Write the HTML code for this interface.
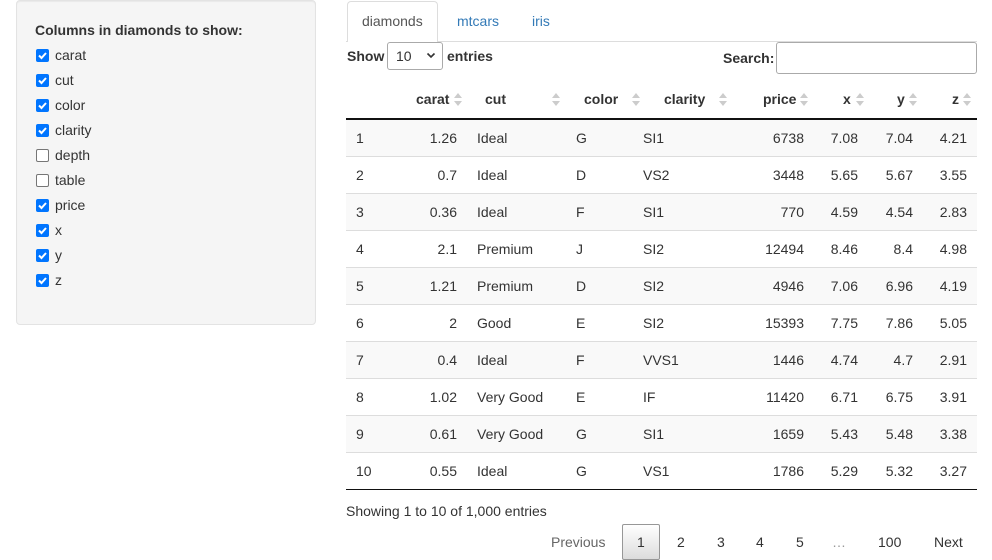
<!DOCTYPE html>
<html><head><meta charset="utf-8"><style>
*{box-sizing:border-box;margin:0;padding:0}
body{width:992px;height:560px;overflow:hidden;background:#fff;font-family:"Liberation Sans",Arial,sans-serif;font-size:14px;color:#333;position:relative}
.a{position:absolute;white-space:nowrap;line-height:16px}
.panel{position:absolute;left:16px;top:0;width:300px;height:325px;background:#f5f5f5;border:1px solid #e3e3e3;border-radius:4px;box-shadow:inset 0 1px 1px rgba(0,0,0,.05)}
.cb{position:absolute;left:36px;width:13px;height:13px;border-radius:2px;background:#0075ff}
.cb svg{position:absolute;left:1px;top:1px}
.cb.u{background:#fff;border:1px solid #767676}
.b{font-weight:bold}
.sort{position:absolute;width:8px;height:14px}
.row{position:absolute;left:346px;width:631px;height:37px;border-top:1px solid #ddd}
.odd{background:#f9f9f9}
.r{text-align:right}
</style></head><body>
<div class="panel"></div>
<div class="a b" style="left:35px;top:22px">Columns in diamonds to show:</div>

<div class="cb" style="top:49px"><svg width="11" height="11" viewBox="0 0 11 11"><path d="M2 5.5l2.5 2.5 4.5-5" stroke="#fff" stroke-width="2" fill="none"/></svg></div><div class="a" style="left:55px;top:47px">carat</div>
<div class="cb" style="top:74px"><svg width="11" height="11" viewBox="0 0 11 11"><path d="M2 5.5l2.5 2.5 4.5-5" stroke="#fff" stroke-width="2" fill="none"/></svg></div><div class="a" style="left:55px;top:72px">cut</div>
<div class="cb" style="top:99px"><svg width="11" height="11" viewBox="0 0 11 11"><path d="M2 5.5l2.5 2.5 4.5-5" stroke="#fff" stroke-width="2" fill="none"/></svg></div><div class="a" style="left:55px;top:97px">color</div>
<div class="cb" style="top:124px"><svg width="11" height="11" viewBox="0 0 11 11"><path d="M2 5.5l2.5 2.5 4.5-5" stroke="#fff" stroke-width="2" fill="none"/></svg></div><div class="a" style="left:55px;top:122px">clarity</div>
<div class="cb u" style="top:149px"></div><div class="a" style="left:55px;top:147px">depth</div>
<div class="cb u" style="top:174px"></div><div class="a" style="left:55px;top:172px">table</div>
<div class="cb" style="top:199px"><svg width="11" height="11" viewBox="0 0 11 11"><path d="M2 5.5l2.5 2.5 4.5-5" stroke="#fff" stroke-width="2" fill="none"/></svg></div><div class="a" style="left:55px;top:197px">price</div>
<div class="cb" style="top:224px"><svg width="11" height="11" viewBox="0 0 11 11"><path d="M2 5.5l2.5 2.5 4.5-5" stroke="#fff" stroke-width="2" fill="none"/></svg></div><div class="a" style="left:55px;top:222px">x</div>
<div class="cb" style="top:249px"><svg width="11" height="11" viewBox="0 0 11 11"><path d="M2 5.5l2.5 2.5 4.5-5" stroke="#fff" stroke-width="2" fill="none"/></svg></div><div class="a" style="left:55px;top:247px">y</div>
<div class="cb" style="top:274px"><svg width="11" height="11" viewBox="0 0 11 11"><path d="M2 5.5l2.5 2.5 4.5-5" stroke="#fff" stroke-width="2" fill="none"/></svg></div><div class="a" style="left:55px;top:272px">z</div>

<!-- tabs -->
<div style="position:absolute;left:346px;top:41px;width:631px;border-top:1px solid #ddd"></div>
<div style="position:absolute;left:347px;top:1px;width:91px;height:41px;background:#fff;border:1px solid #ddd;border-bottom:none;border-radius:4px 4px 0 0"></div>
<div class="a" style="left:362px;top:13px;color:#555">diamonds</div>
<div class="a" style="left:457px;top:13px;color:#337ab7">mtcars</div>
<div class="a" style="left:532px;top:13px;color:#337ab7">iris</div>

<div class="a b" style="left:347px;top:48px">Show</div>
<div style="position:absolute;left:387px;top:42px;width:56px;height:28px;border:1px solid #aaa;border-radius:3px;background:#fff"></div>
<div class="a" style="left:396px;top:48px">10</div>
<svg style="position:absolute;left:426px;top:52px" width="10" height="7" viewBox="0 0 10 7"><path d="M1.5 1.5l3.5 3.5 3.5-3.5" stroke="#333" stroke-width="1.6" fill="none"/></svg>
<div class="a b" style="left:447px;top:48px">entries</div>
<div class="a b" style="left:723px;top:50px">Search:</div>
<div style="position:absolute;left:776px;top:42px;width:201px;height:32px;border:1px solid #aaa;border-radius:3px;background:#fff"></div>

<!-- header -->
<div class="a b" style="left:416px;top:91px">carat</div>
<div class="a b" style="left:485px;top:91px">cut</div>
<div class="a b" style="left:584px;top:91px">color</div>
<div class="a b" style="left:664px;top:91px">clarity</div>
<div class="a b" style="left:763px;top:91px">price</div>
<div class="a b" style="left:843px;top:91px">x</div>
<div class="a b" style="left:897px;top:91px">y</div>
<div class="a b" style="left:952px;top:91px">z</div>
<svg style="position:absolute;left:0;top:0" width="992" height="130">
<g fill="#ccc">
<path d="M454 98h8l-4-5z M454 101h8l-4 5z"/>
<path d="M552 98h8l-4-5z M552 101h8l-4 5z"/>
<path d="M632 98h8l-4-5z M632 101h8l-4 5z"/>
<path d="M719 98h8l-4-5z M719 101h8l-4 5z"/>
<path d="M800 98h8l-4-5z M800 101h8l-4 5z"/>
<path d="M856 98h8l-4-5z M856 101h8l-4 5z"/>
<path d="M909 98h8l-4-5z M909 101h8l-4 5z"/>
<path d="M963 98h8l-4-5z M963 101h8l-4 5z"/>
</g></svg>
<div style="position:absolute;left:346px;top:118px;width:631px;border-top:2px solid #111"></div>

<div class="row odd" style="top:120px;border-top:none"></div>
<div class="row" style="top:156px"></div>
<div class="row odd" style="top:193px"></div>
<div class="row" style="top:230px"></div>
<div class="row odd" style="top:267px"></div>
<div class="row" style="top:304px"></div>
<div class="row odd" style="top:341px"></div>
<div class="row" style="top:378px"></div>
<div class="row odd" style="top:415px"></div>
<div class="row" style="top:452px"></div>
<div style="position:absolute;left:346px;top:489px;width:631px;border-top:1px solid #111"></div>

<div id="cells"></div>
<script>
var d=[["1","1.26","Ideal","G","SI1","6738","7.08","7.04","4.21"],
["2","0.7","Ideal","D","VS2","3448","5.65","5.67","3.55"],
["3","0.36","Ideal","F","SI1","770","4.59","4.54","2.83"],
["4","2.1","Premium","J","SI2","12494","8.46","8.4","4.98"],
["5","1.21","Premium","D","SI2","4946","7.06","6.96","4.19"],
["6","2","Good","E","SI2","15393","7.75","7.86","5.05"],
["7","0.4","Ideal","F","VVS1","1446","4.74","4.7","2.91"],
["8","1.02","Very Good","E","IF","11420","6.71","6.75","3.91"],
["9","0.61","Very Good","G","SI1","1659","5.43","5.48","3.38"],
["10","0.55","Ideal","G","VS1","1786","5.29","5.32","3.27"]];
var h="";
for(var i=0;i<10;i++){var t=130+i*37,r=d[i];
h+='<div class="a" style="left:356px;top:'+t+'px">'+r[0]+'</div>';
h+='<div class="a r" style="right:'+(992-457)+'px;top:'+t+'px">'+r[1]+'</div>';
h+='<div class="a" style="left:477px;top:'+t+'px">'+r[2]+'</div>';
h+='<div class="a" style="left:576px;top:'+t+'px">'+r[3]+'</div>';
h+='<div class="a" style="left:643px;top:'+t+'px">'+r[4]+'</div>';
h+='<div class="a r" style="right:'+(992-804)+'px;top:'+t+'px">'+r[5]+'</div>';
h+='<div class="a r" style="right:'+(992-858)+'px;top:'+t+'px">'+r[6]+'</div>';
h+='<div class="a r" style="right:'+(992-913)+'px;top:'+t+'px">'+r[7]+'</div>';
h+='<div class="a r" style="right:'+(992-967)+'px;top:'+t+'px">'+r[8]+'</div>';}
document.getElementById("cells").innerHTML=h;
</script>

<div class="a" style="left:346px;top:503px">Showing 1 to 10 of 1,000 entries</div>
<div style="position:absolute;left:622px;top:524px;width:38px;height:36px;border:1px solid #979797;border-radius:2px;background:linear-gradient(#fff,#dcdcdc)"></div>
<div class="a" style="left:551px;top:534px;color:#666">Previous</div>
<div class="a" style="left:637px;top:534px">1</div>
<div class="a" style="left:677px;top:534px">2</div>
<div class="a" style="left:717px;top:534px">3</div>
<div class="a" style="left:756px;top:534px">4</div>
<div class="a" style="left:796px;top:534px">5</div>
<div class="a" style="left:832px;top:534px;color:#999">…</div>
<div class="a" style="left:878px;top:534px">100</div>
<div class="a" style="left:934px;top:534px">Next</div>
</body></html>
